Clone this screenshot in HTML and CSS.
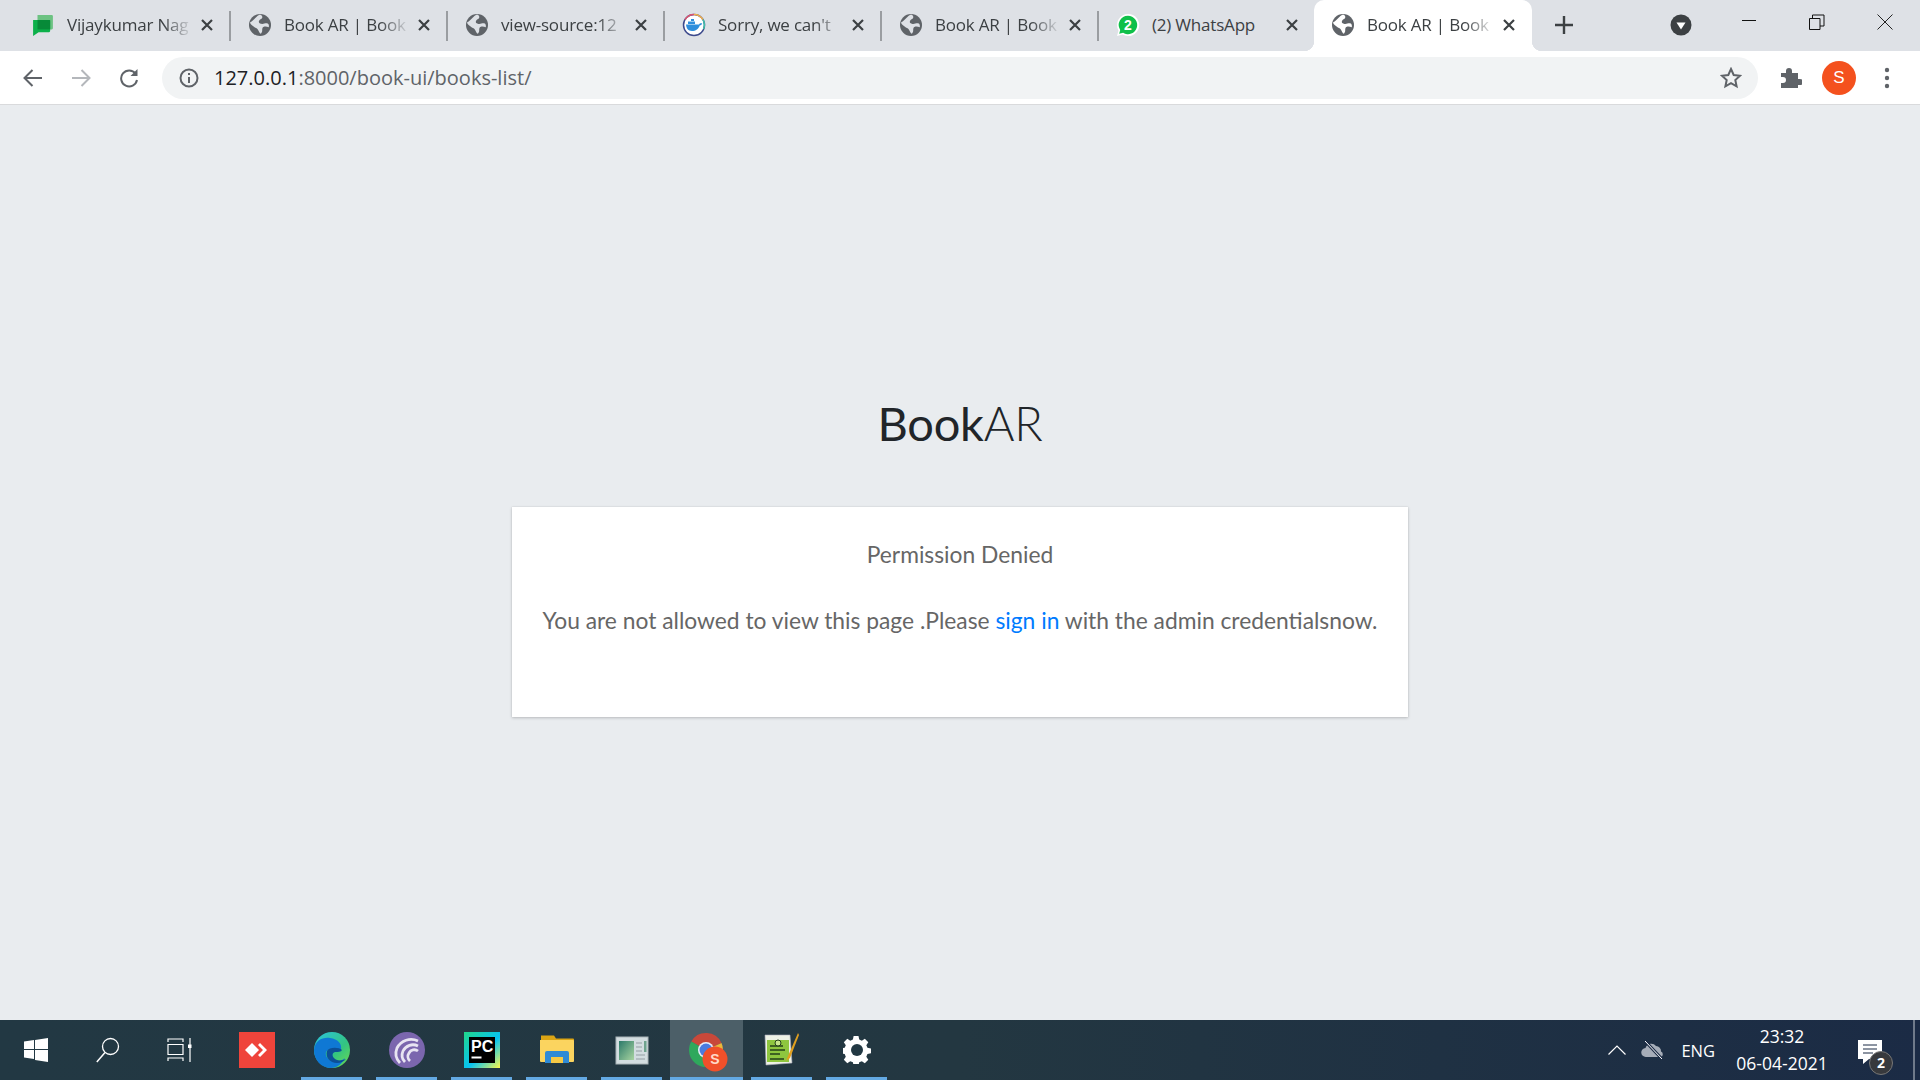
FILE: index.html
```html
<!DOCTYPE html>
<html lang="en">
<head>
<meta charset="utf-8">
<title>Book AR | Book</title>
<link rel="stylesheet" href="styles.css">
</head>
<body>
<svg class="defs" width="0" height="0" aria-hidden="true">
  <symbol id="globe" viewBox="0 0 20 20">
    <circle cx="10" cy="10" r="10" fill="#5f6368"/>
    <path class="globe-land" d="M1 7.500c2-.5 3.500-2.500 5-4 1-1 2-2.300 4-3 1.500.5 2.500 1.500 2 3-.5 1.300-2.500 1.500-3 3-.5 1.700 1.500 2.500 3 2.500 2 0 3-1 4.500-.5 1.500.5 1.800 2 1.500 3.500-1.500-.5-3-1-4.500-.5-1.500.5-1.500 2-1.500 3.500 0 1-.5 2.500-1.500 3-1-1-1.500-2.500-2.500-4-.8-1.300-2.500-1.500-3.500-2.500-1.500-1.300-3.500-2-3.500-4z"/>
  </symbol>
  <symbol id="close" viewBox="0 0 14 14">
    <path d="M2 2l10 10M12 2L2 12" stroke="#3c4043" stroke-width="2.200" fill="none"/>
  </symbol>
</svg>

<header class="tabstrip">
  <div class="tab">
    <svg class="favicon" viewBox="0 0 20 20"><path d="M5 1h13a1 1 0 0 1 1 1v11a1 1 0 0 1-1 1H5z" fill="#6cc282"/><path d="M1 5.500h14.500a1 1 0 0 1 1 1v9a1 1 0 0 1-1 1H6L1 20z" fill="#0cb04a"/><rect x="5" y="5.500" width="11.500" height="8.500" fill="#078a38"/></svg>
    <span class="tab-title">Vijaykumar Nag</span>
    <svg class="tab-close"><use href="#close"/></svg>
  </div>
  <div class="tab">
    <svg class="favicon"><use href="#globe"/></svg>
    <span class="tab-title">Book AR | Book</span>
    <svg class="tab-close"><use href="#close"/></svg>
  </div>
  <div class="tab">
    <svg class="favicon"><use href="#globe"/></svg>
    <span class="tab-title">view-source:12</span>
    <svg class="tab-close"><use href="#close"/></svg>
  </div>
  <div class="tab">
    <svg class="favicon favicon-wide" viewBox="0 0 24 24">
      <circle cx="12" cy="12" r="10.500" fill="#fff" stroke="#3d4a8c" stroke-width="1.500"/>
      <path d="M12 1.500a10.500 10.500 0 0 1 9 5.200" fill="none" stroke="#f3b04a" stroke-width="1.500"/>
      <path d="M3 6.700A10.500 10.500 0 0 1 12 1.500" fill="none" stroke="#e0566e" stroke-width="1.500"/>
      <path d="M21 6.700a10.500 10.500 0 0 1 .5 9.300" fill="none" stroke="#41c0a8" stroke-width="1.500"/>
      <path d="M4 11.500h13c.5-1.200 2-1.500 3.200-1-.4 1.300-1.500 2-2.500 2-1 3.500-4 5.500-7.700 5.500-3.800 0-5.700-2.800-6-6.500z" fill="#2f8fdc"/>
      <path d="M6 8.500h7v2.500H6zM9 6h3v2H9z" fill="#2f8fdc"/>
    </svg>
    <span class="tab-title">Sorry, we can't</span>
    <svg class="tab-close"><use href="#close"/></svg>
  </div>
  <div class="tab">
    <svg class="favicon"><use href="#globe"/></svg>
    <span class="tab-title">Book AR | Book</span>
    <svg class="tab-close"><use href="#close"/></svg>
  </div>
  <div class="tab tab-last">
    <svg class="favicon favicon-wide" viewBox="0 0 24 24">
      <path d="M12 1a11 11 0 0 0-9.500 16.500L1 23l5.700-1.500A11 11 0 1 0 12 1z" fill="#fff"/>
      <path d="M12 2.800A9.200 9.200 0 0 0 4.200 17l-1 3.800 3.900-1A9.200 9.200 0 1 0 12 2.800z" fill="#0fc04a"/>
      <text class="wa-badge" x="12" y="17" text-anchor="middle">2</text>
    </svg>
    <span class="tab-title tab-title-full">(2) WhatsApp</span>
    <svg class="tab-close"><use href="#close"/></svg>
  </div>
  <div class="tab tab-active">
    <svg class="favicon favicon-active"><use href="#globe"/></svg>
    <span class="tab-title">Book AR | Book</span>
    <svg class="tab-close"><use href="#close"/></svg>
  </div>
  <svg class="new-tab" viewBox="0 0 18 18"><path d="M9 0v18M0 9h18" stroke="#3c4043" stroke-width="2.400"/></svg>
  <svg class="tab-search" viewBox="0 0 22 22"><circle cx="11" cy="11" r="10.500" fill="#3c4043"/><path d="M6.500 8.500h9L11 15.500z" fill="#fff"/></svg>
  <div class="win-controls">
    <svg class="win-btn" viewBox="0 0 16 16"><path d="M1 6.500h14" stroke="#111" stroke-width="1"/></svg>
    <svg class="win-btn" viewBox="0 0 16 16"><path d="M.5 4.500h10.500v11H.5zM3.500 4.500V1h11.500v11H11" fill="none" stroke="#111"/></svg>
    <svg class="win-btn" viewBox="0 0 16 16"><path d="M.5.500l15 15M15.500.500l-15 15" stroke="#222" fill="none"/></svg>
  </div>
</header>

<nav class="toolbar">
  <svg class="nav-icon" viewBox="0 0 20 20"><path d="M19 10H2M9.500 2L1.500 10l8 8" fill="none" stroke="#5f6368" stroke-width="2"/></svg>
  <svg class="nav-icon" viewBox="0 0 20 20"><path d="M1 10h17M10.500 2l8 8-8 8" fill="none" stroke="#b4b7bb" stroke-width="2"/></svg>
  <svg class="nav-icon" viewBox="0 0 20 20"><path d="M16.500 5.500A8 8 0 1 0 18 12" fill="none" stroke="#5f6368" stroke-width="2"/><path d="M18.500 1v7h-7z" fill="#5f6368"/></svg>
  <div class="omnibox">
    <svg class="info-icon" viewBox="0 0 20 20"><circle cx="10" cy="10" r="8.500" fill="none" stroke="#5f6368" stroke-width="2"/><path d="M10 9v6M10 5v2" stroke="#5f6368" stroke-width="2"/></svg>
    <span class="url"><span class="url-host">127.0.0.1</span>:8000/book-ui/books-list/</span>
    <svg class="star-icon" viewBox="0 0 22 22"><path d="M11 2l2.700 6 6.300.7-4.700 4.300 1.300 6.400-5.600-3.200-5.600 3.200 1.300-6.400L2 8.700 8.300 8z" fill="none" stroke="#5f6368" stroke-width="2"/></svg>
  </div>
  <svg class="puzzle" viewBox="0 0 22 22"><path d="M1 7h5V5a3 3 0 0 1 6 0v2h6v6h2a3 3 0 0 1 0 6h-2v3H1v-5h2a3 3 0 0 0 0-6H1z" fill="#5f6368" transform="translate(0 -1)"/></svg>
  <div class="avatar">S</div>
  <svg class="menu-dots" viewBox="0 0 6 22"><circle cx="3" cy="3" r="2.200" fill="#5f6368"/><circle cx="3" cy="11" r="2.200" fill="#5f6368"/><circle cx="3" cy="19" r="2.200" fill="#5f6368"/></svg>
</nav>

<main class="page">
  <h1 class="logo"><span class="logo-strong">Book</span>AR</h1>
  <section class="card">
    <p class="card-title">Permission Denied</p>
    <p class="card-text">You are not allowed to view this page .Please <a class="link" href="#">sign in</a> with the admin credentialsnow.</p>
  </section>
</main>

<footer class="taskbar">
  <div class="tb-system">
    <svg class="start" viewBox="0 0 24 24"><path d="M0 3.500l10-1.400V11H0zM11 2l13-2v11H11zM0 12h10v9L0 19.600zM11 12h13v12l-13-2z" fill="#fff"/></svg>
    <svg class="search" viewBox="0 0 24 26"><circle cx="14.500" cy="9.500" r="8" fill="none" stroke="#fff" stroke-width="1.300"/><path d="M9 15.500L.8 25" stroke="#fff" stroke-width="1.500"/></svg>
    <svg class="taskview" viewBox="0 0 26 24"><path d="M1 4V1h15v3M1 6.500h15v10H1zM1 23v-3h15v3M23 0v24" fill="none" stroke="#fff" stroke-width="1.200"/><rect x="21" y="6.500" width="3.500" height="3.500" fill="#fff"/></svg>
  </div>
  <div class="tb-apps">
    <div class="app">
      <svg class="app-icon" viewBox="0 0 36 36"><rect width="36" height="36" fill="#ef443b"/><path d="M13 11l7 7-7 7-7-7z" fill="#fff"/><path d="M21 11l7 7-7 7-2-2 5-5-5-5z" fill="#fff"/></svg>
    </div>
    <div class="app app-open">
      <svg class="app-icon" viewBox="0 0 36 36">
        <defs>
          <linearGradient id="edgeA" x1="0" y1="0" x2="1" y2="1"><stop offset="0" stop-color="#2bc4e0"/><stop offset=".6" stop-color="#33c481"/><stop offset="1" stop-color="#6fdc4d"/></linearGradient>
        </defs>
        <circle cx="18" cy="18" r="18" fill="url(#edgeA)"/>
        <path d="M0 18C1 8 9 5 16 6c8 1 12 6 11 11-8 0-13-1-15 3-1 3 1 7 6 9 4 1 10 0 13-3-3 6-8 10-14 10C7 36 0 28 0 18z" fill="#0f78d4"/>
        <path d="M13 19c-2 6 3 12 10 12 4 0 7-2 9-4-4 2-10 2-12-1-2-2-2-5 1-6 3 0 6 0 7-2-3-3-13-3-15 1z" fill="#0c4f96"/>
      </svg>
    </div>
    <div class="app app-open">
      <svg class="app-icon" viewBox="0 0 36 36"><circle cx="18" cy="18" r="18" fill="#7b66ae"/><g fill="none" stroke="#e8e4f2" stroke-width="2.800"><path d="M29 9a16 16 0 0 0-21 7 14 14 0 0 0 3 15"/><path d="M29 14a11 11 0 0 0-15 5 10 10 0 0 0 2 11"/><path d="M29 19a6 6 0 0 0-9 2 6 6 0 0 0 1 8"/></g></svg>
    </div>
    <div class="app app-open">
      <svg class="app-icon" viewBox="0 0 36 36">
        <defs><linearGradient id="pcA" x1="0" y1="0" x2="1" y2="1"><stop offset="0" stop-color="#21d789"/><stop offset=".55" stop-color="#07c3f2"/><stop offset="1" stop-color="#fcf84a"/></linearGradient></defs>
        <rect width="36" height="36" fill="url(#pcA)"/>
        <rect x="5" y="5" width="26" height="26" fill="#000"/>
        <text class="pc-text" x="7" y="20">PC</text>
        <rect x="7.500" y="24.500" width="10" height="2" fill="#fff"/>
      </svg>
    </div>
    <div class="app app-open">
      <svg class="app-icon" viewBox="0 0 36 36"><path d="M2 3.500h13l2 3h17a1 1 0 0 1 1 1v5H2z" fill="#dba514"/><path d="M1 8h33a1 1 0 0 1 1 1v20a1 1 0 0 1-1 1H2a1 1 0 0 1-1-1z" fill="#fbd45f"/><path d="M6 31V21a2 2 0 0 1 2-2h20a2 2 0 0 1 2 2v10h-6v-6H12v6z" fill="#2f8ad6"/><rect x="12" y="25" width="12" height="6" fill="#f6c945"/></svg>
    </div>
    <div class="app app-open">
      <svg class="app-icon" viewBox="0 0 36 36">
        <defs><linearGradient id="winA" x1="0" y1="0" x2="1" y2="1"><stop offset="0" stop-color="#2c7a6a"/><stop offset="1" stop-color="#a8d4a0"/></linearGradient></defs>
        <rect x="2" y="5" width="32" height="27" fill="#d3dde0" stroke="#aab4b8"/>
        <rect x="5" y="9" width="15" height="19" fill="url(#winA)"/>
        <rect x="30" y="9" width="2.500" height="11" fill="#6fa38e"/>
        <path d="M22 11h6M22 15h6M22 19h6M22 23h9M22 27h9" stroke="#aab4b8" stroke-width="1.500"/>
      </svg>
    </div>
    <div class="app app-open app-active">
      <svg class="chrome" viewBox="0 0 40 40">
        <path d="M17 17L2.300 8.500A17 17 0 0 1 32.500 10z" fill="#c8483a"/>
        <path d="M17 17L32.500 10A17 17 0 0 1 17 34z" fill="#eab73a"/>
        <path d="M17 17L17 34A17 17 0 0 1 2.300 8.500z" fill="#2fa85c"/>
        <circle cx="17" cy="17" r="8" fill="#e8eef8"/><circle cx="17" cy="17" r="6.500" fill="#4a7be0"/>
        <circle cx="26" cy="26" r="12.500" fill="#f0502a"/>
        <text class="chrome-s" x="26" y="31" text-anchor="middle">S</text>
      </svg>
    </div>
    <div class="app app-open">
      <svg class="app-icon" viewBox="0 0 36 36">
        <path d="M1 3h25l2 28-26 2z" fill="#eef2e6" stroke="#aab" stroke-width=".6"/>
        <rect x="3" y="8" width="22" height="22" fill="#8ec63f"/>
        <path d="M6 14h13M6 18h15M6 22h10M6 27h14" stroke="#24401a" stroke-width="1.600"/>
        <circle cx="14" cy="11" r="3" fill="#c6e58b" stroke="#24401a"/>
        <path d="M34 1L24 24l-2 5 4-3L35 3z" fill="#e0a020"/>
      </svg>
    </div>
    <div class="app app-open">
      <svg class="gear" viewBox="0 0 28 28"><path d="M14 0l2.600 0 .8 3.800 2.800 1.200 3.200-2.100 3.700 3.700-2.100 3.200 1.200 2.800 3.800.8v5.200l-3.800.8-1.200 2.800 2.100 3.200-3.700 3.700-3.200-2.100-2.800 1.200-.8 3.800h-5.200l-.8-3.800-2.800-1.200-3.200 2.100-3.700-3.700 2.100-3.200-1.200-2.800-3.800-.8v-5.200l3.800-.8 1.200-2.800-2.100-3.200 3.700-3.700 3.200 2.100 2.800-1.200.8-3.800z" transform="scale(.933)" fill="#fff"/><circle cx="14" cy="14" r="6" fill="#223843"/></svg>
    </div>
  </div>
  <div class="tray">
    <svg class="chevron" viewBox="0 0 18 10"><path d="M.5 9.500L9 1l8.500 8.500" fill="none" stroke="#fff" stroke-width="1.200"/></svg>
    <svg class="cloud" viewBox="0 0 24 20"><path d="M5 17a4.500 4.500 0 0 1-.5-9A6 6 0 0 1 15 6a5 5 0 0 1 5 5.500A3 3 0 0 1 20 17z" fill="#a6adb8"/><path d="M4 1l17 18" stroke="#1b2b45" stroke-width="3"/><path d="M4 1l17 18" stroke="#fff" stroke-width="1"/></svg>
    <span class="lang">ENG</span>
    <div class="clock"><span>23:32</span><span>06-04-2021</span></div>
    <div class="notif">
      <svg class="notif-bubble" viewBox="0 0 24 24"><path d="M0 0h24v19H11l-6 5v-5H0z" fill="#fff"/><path d="M5 5h14M5 9h14M5 13h10" stroke="#1b2b45" stroke-width="1"/></svg>
      <span class="notif-count">2</span>
    </div>
    <div class="show-desktop"></div>
  </div>
</footer>
</body>
</html>
```

FILE: styles.css
```css
* { box-sizing: border-box; }
html, body { margin: 0; height: 100%; }
body {
  width: 1920px;
  height: 1080px;
  overflow: hidden;
  display: flex;
  flex-direction: column;
  background: #e9ecef;
  font-family: "Open Sans", "Liberation Sans", sans-serif;
}
.defs { position: absolute; }

/* tabs */
.tabstrip {
  height: 51px;
  flex: none;
  display: flex;
  align-items: center;
  padding-left: 13px;
  background: #dee1e6;
}
.tab {
  position: relative;
  width: 217px;
  height: 51px;
  flex: none;
  display: flex;
  align-items: center;
  padding: 0 16px 2px 19px;
  color: #3c4043;
  font-size: 17px;
}
.tab::after {
  content: "";
  position: absolute;
  right: -1px;
  top: 11px;
  height: 30px;
  width: 2px;
  background: #9a9da1;
}
.tab-last::after { display: none; }
.favicon { width: 22px; height: 22px; flex: none; }
.favicon-wide { width: 24px; height: 24px; margin-left: -1px; margin-right: -1px; }
.favicon-active { margin-left: -1px; }
.globe-land { fill: var(--land, #dee1e6); }
.tab-title {
  flex: 1;
  min-width: 0;
  margin-left: 13px;
  white-space: nowrap;
  letter-spacing: -.2px;
  -webkit-mask-image: linear-gradient(to right, #000 78%, rgba(0,0,0,.1) 100%);
  mask-image: linear-gradient(to right, #000 78%, rgba(0,0,0,.1) 100%);
}
.tab-title-full { -webkit-mask-image: none; mask-image: none; }
.tab-close { width: 14px; height: 14px; flex: none; margin-left: 10px; }
.tab-active {
  --land: #fff;
  background: #fff;
  border-radius: 10px 10px 0 0;
  width: 218px;
  margin-left: -1px;
}
.tab-active::before,
.tab-active::after {
  content: "";
  position: absolute;
  display: block;
  top: auto;
  bottom: 0;
  width: 10px;
  height: 10px;
  background: radial-gradient(circle at 100% 0, transparent 10px, #fff 10.500px);
}
.tab-active::before { left: -10px; right: auto; background: radial-gradient(circle at 0 0, transparent 10px, #fff 10.500px); }
.tab-active::after { right: -10px; }
.new-tab { width: 18px; height: 18px; flex: none; margin: 0 0 2px 23px; }
.tab-search { width: 22px; height: 22px; flex: none; margin: 0 0 2px 97px; }
.win-controls {
  margin-left: auto;
  display: flex;
  gap: 52px;
  padding-right: 27px;
  margin-top: -7px;
}
.win-btn { width: 16px; height: 16px; display: block; }

/* toolbar */
.toolbar {
  height: 54px;
  flex: none;
  display: flex;
  align-items: center;
  padding: 0 30px 0 23px;
  background: #fff;
  border-bottom: 1px solid #d9dadc;
}
.nav-icon { width: 20px; height: 20px; flex: none; margin-right: 28px; }
.omnibox {
  flex: 1;
  height: 42px;
  display: flex;
  align-items: center;
  margin-left: -5px;
  padding: 0 16px 0 17px;
  border-radius: 21px;
  background: #f1f3f4;
}
.info-icon { width: 20px; height: 20px; flex: none; }
.url { margin-left: 15px; font-size: 20px; color: #5f6368; flex: 1; }
.url-host { color: #202124; }
.star-icon { width: 22px; height: 22px; flex: none; }
.puzzle { width: 22px; height: 22px; flex: none; margin-left: 22px; }
.avatar {
  width: 34px;
  height: 34px;
  flex: none;
  margin-left: 20px;
  border-radius: 50%;
  background: #f4511e;
  color: #fff;
  font: 17px/34px "Liberation Sans", sans-serif;
  text-align: center;
}
.menu-dots { width: 6px; height: 22px; flex: none; margin-left: 28px; }

/* page */
.page {
  flex: 1;
  min-height: 0;
  display: flex;
  flex-direction: column;
  align-items: center;
  padding-top: 284px;
  background: #e9ecef;
}
.logo {
  margin: 0 0 50px;
  height: 68px;
  font: 300 47px/68px Lato, "Noto Sans", sans-serif;
  color: #212529;
  letter-spacing: -.3px;
}
.logo-strong { font-weight: 400; }
.card {
  width: 896px;
  height: 210px;
  padding: 27px 20px 0;
  background: #fff;
  text-align: center;
  box-shadow: 0 0 1px rgba(0,0,0,.125), 0 1px 3px rgba(0,0,0,.2);
  color: #666;
  font: 400 22.800px/40px Lato, "Noto Sans", sans-serif;
}
.card-title { margin: 0 0 26px; }
.card-text { margin: 0; white-space: nowrap; }
.link { color: #007bff; text-decoration: none; }

/* taskbar */
.taskbar {
  height: 60px;
  flex: none;
  display: flex;
  align-items: stretch;
  background: linear-gradient(to right, #223843, #233741 50%, #1b2b45);
}
.tb-system { width: 216px; flex: none; display: flex; align-items: center; }
.start { width: 24px; height: 24px; margin-left: 24px; }
.search { width: 24px; height: 26px; margin-left: 48px; }
.taskview { width: 26px; height: 24px; margin-left: 47px; }
.tb-apps { display: flex; flex: none; margin-left: 4px; gap: 14px; }
.app {
  width: 61px;
  height: 60px;
  flex: none;
  display: flex;
  align-items: center;
  justify-content: center;
}
.app:first-child { width: 72px; margin: 0 -6px 0 1px; }
.app-open { box-shadow: inset 0 -3px 0 #63a9e3; }
.app-active { width: 73px; margin: 0 -6px; background: #4c5f68; }
.app-icon { width: 36px; height: 36px; display: block; }
.chrome { width: 40px; height: 40px; display: block; margin: 6px 0 0 5px; }
.gear { width: 28px; height: 28px; display: block; }
.chrome-s { font: 700 14px "Liberation Sans", sans-serif; fill: #ffd9c8; }
.pc-text { font: 700 16px "Liberation Sans", sans-serif; fill: #fff; }
.wa-badge { font: 700 14px "Liberation Sans", sans-serif; fill: #fff; }
.tray {
  flex: 1;
  display: flex;
  align-items: center;
  justify-content: flex-end;
  color: #fff;
  font-size: 16.500px;
}
.chevron { width: 18px; height: 10px; flex: none; }
.cloud { width: 24px; height: 20px; flex: none; margin-left: 15px; }
.lang { margin-left: 16px; }
.clock {
  width: 112px;
  margin-left: 11px;
  display: flex;
  flex-direction: column;
  align-items: center;
  gap: 4px;
  font-size: 17.500px;
  line-height: 23px;
}
.notif { position: relative; width: 36px; height: 36px; flex: none; margin-left: 19px; }
.notif-bubble { width: 24px; height: 24px; position: absolute; left: 1px; top: 8px; }
.notif-count {
  position: absolute;
  left: 12px;
  top: 19px;
  width: 24px;
  height: 24px;
  border-radius: 50%;
  background: #37393d;
  border: 1px solid #777;
  font: 700 14px/22px "Open Sans", sans-serif;
  text-align: center;
}
.show-desktop { width: 2px; height: 60px; margin-left: 20px; margin-right: 5px; background: #6f7a8a; }
```
